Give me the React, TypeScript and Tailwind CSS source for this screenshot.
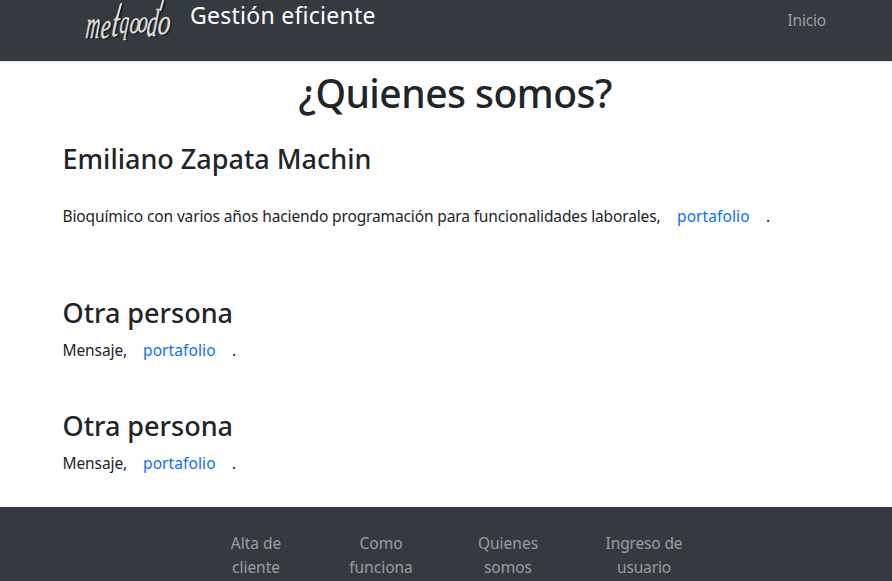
import React from "react";

const logoLetters = [
  { c: "m", x: 0, y: 38, s: 39, w: 0.5 },
  { c: "e", x: 15, y: 38, s: 36, w: 0.6 },
  { c: "t", x: 26, y: 36, s: 38, w: 0.65 },
  { c: "q", x: 34, y: 33, s: 33, w: 0.55 },
  { c: "o", x: 44, y: 33, s: 31, w: 0.65 },
  { c: "o", x: 52, y: 32, s: 31, w: 0.65 },
  { c: "d", x: 61, y: 36, s: 39, w: 0.55 },
  { c: "o", x: 72, y: 34, s: 36, w: 0.7 },
];

function Logo() {
  return (
    <svg className="h-[44px] w-[92px] shrink-0 overflow-visible" viewBox="0 0 92 44" role="img" aria-label="metacodo">
      {["#15181b", "#dededa"].map((fill, layer) => (
        <g
          key={fill}
          fill={fill}
          stroke={fill}
          strokeWidth="0.5"
          transform={layer === 0 ? "translate(1.6 1.4)" : undefined}
          fontFamily="'Liberation Serif', serif"
          fontStyle="italic"
        >
          {logoLetters.map((l, i) => (
            <text key={i} fontSize={l.s} transform={`translate(${l.x} ${l.y}) skewX(-6) scale(${l.w} 1)`}>
              {l.c}
            </text>
          ))}
          <path d="M36 4 L32 18 M78 1 L75.5 10" fill="none" strokeWidth="2" strokeLinecap="round" />
        </g>
      ))}
    </svg>
  );
}

type PersonProps = { name: string; message: string; className: string; nameClass: string; spacing: string };

function Person({ name, message, className, nameClass, spacing }: PersonProps) {
  return (
    <section className={className}>
      <h2 className={`whitespace-nowrap text-[27px] font-medium leading-[34px] ${nameClass}`}>{name}</h2>
      <p className="flex whitespace-nowrap leading-6">
        <span className={spacing}>{message}</span>
        <a href="#" className="ml-4 w-[74px] tracking-[0.1px] text-[#0d6efd]">portafolio</a>
        <span className="ml-[15px]">.</span>
      </p>
    </section>
  );
}

export default function App() {
  return (
    <div className="flex h-[581px] w-[892px] flex-col overflow-hidden bg-white font-['Noto_Sans','Open_Sans',sans-serif] text-[15.5px] text-[#212529]">
      <header className="flex h-[62px] shrink-0 items-start border-b border-[#e4e6e8] bg-[#353a41] pl-[85px] pr-[66px]">
        <Logo />
        <span className="-mt-px ml-[13px] w-[186px] whitespace-nowrap text-[23px] leading-8 tracking-[0.26px] text-white">Gestión eficiente</span>
        <a href="#" className="ml-auto mt-2 leading-6 tracking-[-0.2px] text-[#9b9d9f]">Inicio</a>
      </header>
      <main className="h-[445px] shrink-0 pl-[62.5px] pr-[62.5px]">
        <h1 className="ml-[236px] mt-[7px] whitespace-nowrap text-[39px] font-medium leading-[48px] tracking-[-0.53px]">¿Quienes somos?</h1>
        <Person
          name="Emiliano Zapata Machin"
          message="Bioquímico con varios años haciendo programación para funcionalidades laborales,"
          className="mt-[25px]"
          nameClass="mb-[28px]"
          spacing="w-[598.5px] tracking-[-0.13px]"
        />
        <Person name="Otra persona" message="Mensaje," className="mt-[68px]" nameClass="mb-[8px]" spacing="w-[64.5px] tracking-[-0.1px]" />
        <Person name="Otra persona" message="Mensaje," className="mt-[47px]" nameClass="mb-[8px]" spacing="w-[64.5px] tracking-[-0.1px]" />
      </main>
      <footer className="grow bg-[#353a41] pt-6">
        <nav className="ml-[216px] flex text-center leading-6 text-[#9b9d9f]">
          <a href="#" className="w-20">Alta de<br />cliente</a>
          <a href="#" className="ml-[45px] w-20">Como<br />funciona</a>
          <a href="#" className="ml-[47px] w-20">Quienes<br />somos</a>
          <a href="#" className="ml-[56px] w-20 whitespace-nowrap tracking-[-0.15px]">Ingreso de<br />usuario</a>
        </nav>
      </footer>
    </div>
  );
}
